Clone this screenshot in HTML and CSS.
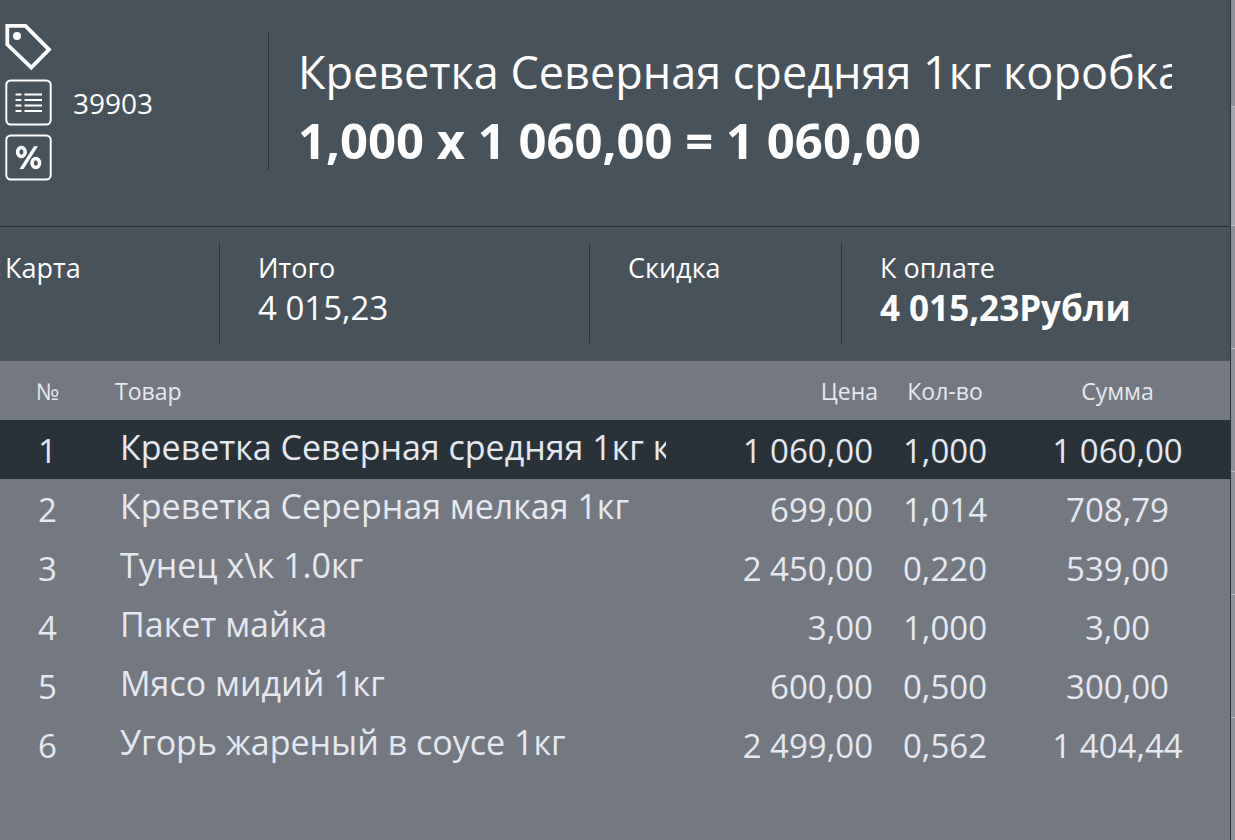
FILE: index.html
```html
<!DOCTYPE html>
<html lang="ru">
<head>
<meta charset="utf-8">
<title>Чек</title>
<link rel="stylesheet" href="styles.css">
</head>
<body>
<div class="screen">
  <main class="receipt">
    <header class="current">
      <div class="tools">
        <button class="tool" type="button" aria-label="Ценник">
          <svg viewBox="0 0 48 48"><path d="M3.300 2.800H21.500L45 26.600L27.300 44.600L3.300 21.500Z" fill="none" stroke="#fff" stroke-width="3.800"/><circle cx="13" cy="13" r="4" fill="#fff"/></svg>
        </button>
        <button class="tool" type="button" aria-label="Список">
          <svg viewBox="0 0 48 48"><rect x="2.300" y="2.500" width="44.400" height="44" rx="4.500" fill="none" stroke="#fff" stroke-width="2"/><path d="M11.500 16.500H17.500M20.500 16.500H38M11.500 22H17.500M20.500 22H38M11.500 27.500H17.500M20.500 27.500H38M11.500 33H17.500M20.500 33H38" stroke="#fff" stroke-width="2.200"/></svg>
        </button>
        <button class="tool" type="button" aria-label="Скидка в процентах">
          <svg viewBox="0 0 48 48"><rect x="2.300" y="2.500" width="44.400" height="44" rx="4.500" fill="none" stroke="#fff" stroke-width="2"/><g fill="none" stroke="#fff" stroke-width="3.600"><ellipse cx="17.400" cy="19" rx="3.800" ry="4.500"/><ellipse cx="31.800" cy="30" rx="3.800" ry="4.500"/></g><path d="M30 13.200H34L19.500 36H15.500Z" fill="#fff"/></svg>
        </button>
      </div>
      <p class="code">39903</p>
      <div class="item">
        <h1 class="item-name">Креветка Северная средняя 1кг коробка</h1>
        <p class="item-sum">1,000 x 1 060,00 = 1 060,00</p>
      </div>
    </header>
    <dl class="totals">
      <div class="total"><dt>Карта</dt></div>
      <div class="total"><dt>Итого</dt><dd>4 015,23</dd></div>
      <div class="total"><dt>Скидка</dt></div>
      <div class="total"><dt>К оплате</dt><dd class="due">4 015,23Рубли</dd></div>
    </dl>
    <table class="lines">
      <thead>
        <tr><th class="num">№</th><th class="name">Товар</th><th class="price">Цена</th><th class="qty">Кол-во</th><th class="sum">Сумма</th></tr>
      </thead>
      <tbody>
        <tr class="selected"><td class="num">1</td><td class="name"><div class="clip">Креветка Северная средняя 1кг к</div></td><td class="price">1 060,00</td><td class="qty">1,000</td><td class="sum">1 060,00</td></tr>
        <tr><td class="num">2</td><td class="name"><div class="clip">Креветка Серерная мелкая 1кг</div></td><td class="price">699,00</td><td class="qty">1,014</td><td class="sum">708,79</td></tr>
        <tr><td class="num">3</td><td class="name"><div class="clip">Тунец х\к 1.0кг</div></td><td class="price">2 450,00</td><td class="qty">0,220</td><td class="sum">539,00</td></tr>
        <tr><td class="num">4</td><td class="name"><div class="clip">Пакет майка</div></td><td class="price">3,00</td><td class="qty">1,000</td><td class="sum">3,00</td></tr>
        <tr><td class="num">5</td><td class="name"><div class="clip">Мясо мидий 1кг</div></td><td class="price">600,00</td><td class="qty">0,500</td><td class="sum">300,00</td></tr>
        <tr><td class="num">6</td><td class="name"><div class="clip">Угорь жареный в соусе 1кг</div></td><td class="price">2 499,00</td><td class="qty">0,562</td><td class="sum">1 404,44</td></tr>
      </tbody>
    </table>
  </main>
  <aside class="edge">
    <div class="tile"></div><div class="tile light"></div><div class="tile"></div><div class="tile"></div><div class="tile"></div><div class="tile"></div><div class="tile"></div>
  </aside>
</div>
</body>
</html>
```
FILE: styles.css
```css
* { box-sizing: border-box; }
body {
  margin: 0;
  font-family: "Open Sans", "Noto Sans", sans-serif;
  color: #fff;
  background: #747880;
}
h1, p, dl, dd { margin: 0; }
.screen { display: flex; min-height: 100vh; }
.receipt { flex: 1; min-width: 0; border-right: 1px solid #2a3239; }

.current {
  display: flex;
  height: 227px;
  padding-right: 58px;
  background: #48525a;
  border-bottom: 1px solid #2a3239;
}
.tools { display: flex; flex-direction: column; gap: 7px; padding: 23px 0 0 4px; }
.tool { display: block; width: 48px; height: 48px; padding: 0; border: 0; background: none; }
.tool svg { display: block; width: 48px; height: 48px; }
.code { width: 216px; padding: 83px 0 0 21px; font-size: 28px; line-height: 40px; }
.item {
  flex: 1;
  min-width: 0;
  height: 137px;
  margin-top: 33px;
  padding-left: 29px;
  border-left: 1px solid #2a3239;
}
.item-name {
  padding-top: 5px;
  font-size: 45px;
  font-weight: 400;
  line-height: 68px;
  white-space: nowrap;
  overflow: hidden;
}
.item-sum { font-size: 49px; font-weight: 700; line-height: 68px; white-space: nowrap; }

.totals {
  display: grid;
  grid-template-columns: 219fr 370fr 252fr 389fr;
  padding: 16px 0 18px;
  background: #48525a;
}
.total { height: 100px; padding: 5px 0 0 38px; border-left: 1px solid #2a3239; white-space: nowrap; }
.total:first-child { padding-left: 5px; border-left: 0; }
.total dt { font-size: 27px; line-height: 40px; }
.total dd { font-size: 33px; line-height: 40px; }
.total .due { font-size: 35px; font-weight: 700; }

.lines { width: 100%; table-layout: fixed; border-collapse: collapse; color: #e4e8f0; }
.lines th { height: 59px; padding: 1px 0 0; font-size: 23px; font-weight: 400; line-height: 32px; }
.lines td { height: 59px; padding: 3px 0 0; font-size: 33px; line-height: 48px; white-space: nowrap; }
.lines .num { width: 95px; text-align: center; }
.lines .name { text-align: left; }
.lines th.name { padding-left: 20px; }
.lines td.name { padding: 0 19px 5px 25px; font-size: 34px; }
.lines .price { width: 200px; padding-right: 12px; text-align: right; }
.lines th.price { padding-right: 7px; }
.lines .qty { width: 120px; text-align: center; }
.lines .sum { width: 225px; text-align: center; }
.clip { overflow: hidden; }
.selected { background: #2a3239; }

.edge { width: 4px; display: flex; flex-direction: column; }
.tile { flex: 0 0 123px; background: #8d9099; border-bottom: 1px solid #b4bcc6; }
.tile:first-child { flex-basis: 107px; }
.tile.light { flex-basis: 119px; background: #a2a5ae; }
.tile:last-child { flex: 1; border-bottom: 0; }
```
